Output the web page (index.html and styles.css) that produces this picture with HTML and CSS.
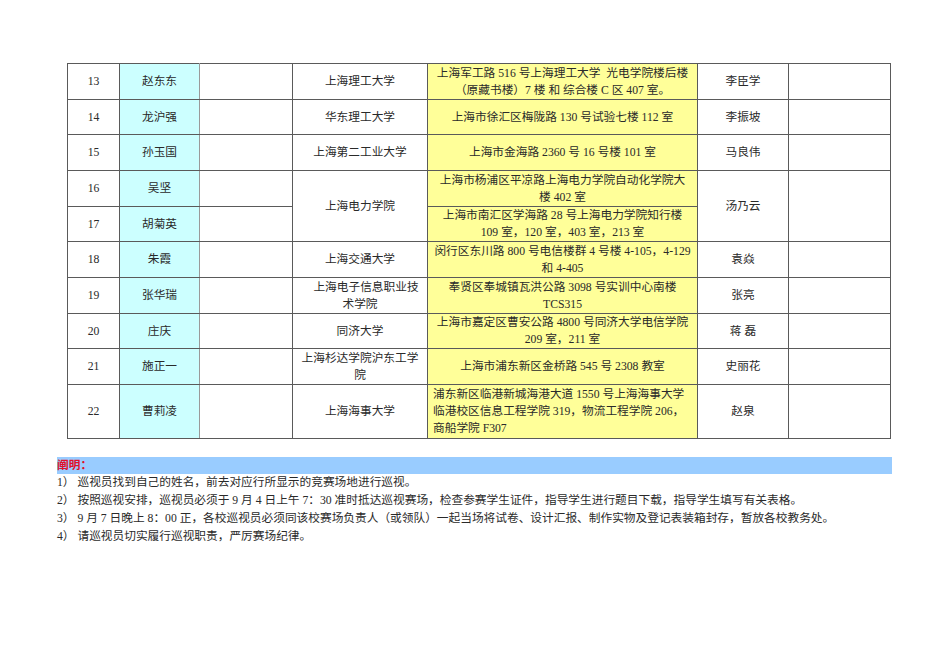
FILE: index.html
```html
<!DOCTYPE html>
<html lang="zh-CN">
<head>
<meta charset="utf-8">
<title>巡视安排</title>
<link rel="stylesheet" href="styles.css">
</head>
<body>
<div class="page">
  <table class="sheet">
    <colgroup>
      <col class="c-no"><col class="c-name"><col class="c-blank"><col class="c-school"><col class="c-addr"><col class="c-lead"><col class="c-last">
    </colgroup>
    <tbody>
      <tr class="h36">
        <td>13</td><td class="cyan">赵东东</td><td></td><td>上海理工大学</td>
        <td class="yellow">上海军工路 516 号上海理工大学&nbsp; 光电学院楼后楼<br>（原藏书楼）7 楼 和 综合楼 C 区 407 室。</td>
        <td>李臣学</td><td></td>
      </tr>
      <tr class="h35">
        <td>14</td><td class="cyan">龙沪强</td><td></td><td>华东理工大学</td>
        <td class="yellow">上海市徐汇区梅陇路 130 号试验七楼 112 室</td>
        <td>李振坡</td><td></td>
      </tr>
      <tr class="h36">
        <td>15</td><td class="cyan">孙玉国</td><td></td><td>上海第二工业大学</td>
        <td class="yellow">上海市金海路 2360 号 16 号楼 101 室</td>
        <td>马良伟</td><td></td>
      </tr>
      <tr class="h36">
        <td>16</td><td class="cyan">吴坚</td><td></td><td rowspan="2">上海电力学院</td>
        <td class="yellow">上海市杨浦区平凉路上海电力学院自动化学院大<br>楼 402 室</td>
        <td rowspan="2">汤乃云</td><td rowspan="2"></td>
      </tr>
      <tr class="h35">
        <td>17</td><td class="cyan">胡菊英</td><td></td>
        <td class="yellow">上海市南汇区学海路 28 号上海电力学院知行楼<br>109 室，120 室，403 室，213 室</td>
      </tr>
      <tr class="h36">
        <td>18</td><td class="cyan">朱霞</td><td></td><td>上海交通大学</td>
        <td class="yellow">闵行区东川路 800 号电信楼群 4 号楼 4-105，4-129<br>和 4-405</td>
        <td>袁焱</td><td></td>
      </tr>
      <tr class="h36">
        <td>19</td><td class="cyan">张华瑞</td><td></td><td><span class="shift">上海电子信息职业技</span><br>术学院</td>
        <td class="yellow">奉贤区奉城镇瓦洪公路 3098 号实训中心南楼<br>TCS315</td>
        <td>张亮</td><td></td>
      </tr>
      <tr class="h35">
        <td>20</td><td class="cyan">庄庆</td><td></td><td>同济大学</td>
        <td class="yellow">上海市嘉定区曹安公路 4800 号同济大学电信学院<br>209 室，211 室</td>
        <td>蒋 磊</td><td></td>
      </tr>
      <tr class="h36">
        <td>21</td><td class="cyan">施正一</td><td></td><td>上海杉达学院沪东工学<br>院</td>
        <td class="yellow">上海市浦东新区金桥路 545 号 2308 教室</td>
        <td>史丽花</td><td></td>
      </tr>
      <tr class="h54">
        <td>22</td><td class="cyan">曹莉凌</td><td></td><td>上海海事大学</td>
        <td class="yellow left">浦东新区临港新城海港大道 1550 号上海海事大学<br>临港校区信息工程学院 319，物流工程学院 206，<br>商船学院 F307</td>
        <td>赵泉</td><td></td>
      </tr>
    </tbody>
  </table>

  <div class="notes">
    <div class="notes-title"><span>阐明：</span></div>
    <p>1） 巡视员找到自己的姓名，前去对应行所显示的竞赛场地进行巡视。</p>
    <p>2） 按照巡视安排，巡视员必须于 9 月 4 日上午 7：30 准时抵达巡视赛场，检查参赛学生证件，指导学生进行题目下载，指导学生填写有关表格。</p>
    <p>3） 9 月 7 日晚上 8：00 正，各校巡视员必须同该校赛场负责人（或领队）一起当场将试卷、设计汇报、制作实物及登记表装箱封存，暂放各校教务处。</p>
    <p>4） 请巡视员切实履行巡视职责，严厉赛场纪律。</p>
  </div>
</div>
</body>
</html>
```

FILE: styles.css
```css
html, body {
  margin: 0;
  padding: 0;
  background: #ffffff;
}

body {
  font-family: "Liberation Serif", "Noto Sans CJK SC", serif;
  font-size: 11.7px;
  color: #2a2a2a;
}

.page {
  padding: 63px 0 0 57px;
}

.sheet {
  margin-left: 10px;
  border-collapse: collapse;
  table-layout: fixed;
  width: 823px;
}

.c-no { width: 52px; }
.c-name { width: 80px; }
.c-blank { width: 93px; }
.c-school { width: 135px; }
.c-addr { width: 270px; }
.c-lead { width: 91px; }
.c-last { width: 102px; }

.sheet td {
  border: 1px solid #5a5a5a;
  padding: 0 2px;
  text-align: center;
  vertical-align: middle;
  line-height: 17px;
  white-space: nowrap;
  overflow: hidden;
}

.sheet .h36 { height: 36px; }
.sheet .h35 { height: 35px; }
.sheet .h54 { height: 54px; }

.sheet td.cyan {
  background: #ccffff;
  border-right-color: #9a9a9a;
}

.sheet td.yellow {
  background: #ffff99;
}

.sheet td.left {
  text-align: left;
  padding-left: 5px;
}

.shift {
  padding-left: 12px;
}

.notes {
  margin-top: 18px;
  width: 835px;
}

.notes-title {
  background: #99ccff;
  height: 17px;
  line-height: 17px;
  color: #e0102a;
  font-weight: bold;
}

.notes p {
  margin: 0;
  line-height: 18px;
  white-space: nowrap;
}
```
